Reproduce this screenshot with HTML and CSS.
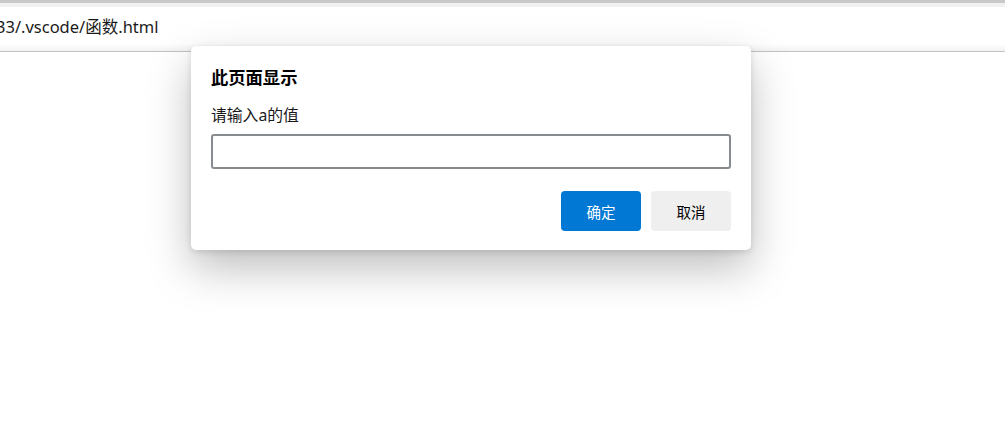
FILE: index.html
```html
<!DOCTYPE html>
<html lang="zh-CN">
<head>
<meta charset="utf-8">
<title>函数</title>
<link rel="stylesheet" href="styles.css">
</head>
<body>
<header class="chrome">
  <div class="chrome-top"></div>
  <div class="chrome-strip"></div>
  <div class="address-row">
    <span class="address-text">33/.vscode/函数.html</span>
  </div>
  <div class="chrome-fade"></div>
</header>
<main class="page">
  <div class="dialog" role="dialog">
    <h1 class="dialog-title">此页面显示</h1>
    <p class="dialog-message">请输入a的值</p>
    <input class="dialog-input" type="text">
    <div class="dialog-actions">
      <button class="btn btn-primary">确定</button>
      <button class="btn btn-secondary">取消</button>
    </div>
  </div>
</main>
</body>
</html>
```
FILE: styles.css
```css
html, body {
  margin: 0;
  padding: 0;
  background: #ffffff;
  font-family: "Noto Sans", "Noto Sans CJK SC", sans-serif;
  color: #1a1a1a;
}

.chrome {
  display: flex;
  flex-direction: column;
}

.chrome-top {
  height: 3px;
  background: #c9c9c9;
}

.chrome-strip {
  height: 4px;
  background: #f1f1f1;
}

.address-row {
  height: 37px;
  display: flex;
  align-items: center;
  overflow: hidden;
  background: #ffffff;
}

.address-text {
  margin-left: -4px;
  font-size: 16.5px;
  color: #1b1b1b;
  white-space: nowrap;
  font-family: "Noto Sans", "Noto Sans CJK SC", sans-serif;
}

.chrome-fade {
  height: 7px;
  background: linear-gradient(#ffffff, #f2f2f2);
  border-bottom: 1px solid #c3c3c3;
}

.page {
  position: relative;
  height: 383px;
}

.dialog {
  position: absolute;
  left: 191px;
  top: -6px;
  width: 520px;
  padding: 20px 20px 19px;
  background: #ffffff;
  border-radius: 5px;
  box-shadow: 0 18px 44px rgba(0, 0, 0, 0.26), 0 2px 6px rgba(0, 0, 0, 0.12);
  display: flex;
  flex-direction: column;
}

.dialog-title {
  margin: 0;
  font-size: 17.3px;
  font-weight: 700;
  line-height: 24px;
  color: #000000;
}

.dialog-message {
  margin: 15px 0 0;
  font-size: 15.8px;
  line-height: 20px;
  color: #1a1a1a;
}

.dialog-input {
  margin: 9px 0 0;
  box-sizing: border-box;
  width: 520px;
  height: 35px;
  border: 2px solid #878b90;
  border-radius: 3px;
  padding: 0 6px;
  font-size: 14px;
  outline: none;
  background: #ffffff;
}

.dialog-actions {
  display: flex;
  justify-content: flex-end;
  gap: 10px;
  margin-top: 22px;
}

.btn {
  width: 80px;
  height: 40px;
  border: none;
  border-radius: 4px;
  font-size: 14.5px;
  font-family: "Noto Sans", "Noto Sans CJK SC", sans-serif;
  padding: 0;
}

.btn-primary {
  background: #0078d4;
  color: #ffffff;
}

.btn-secondary {
  background: #efefef;
  color: #000000;
}
```
